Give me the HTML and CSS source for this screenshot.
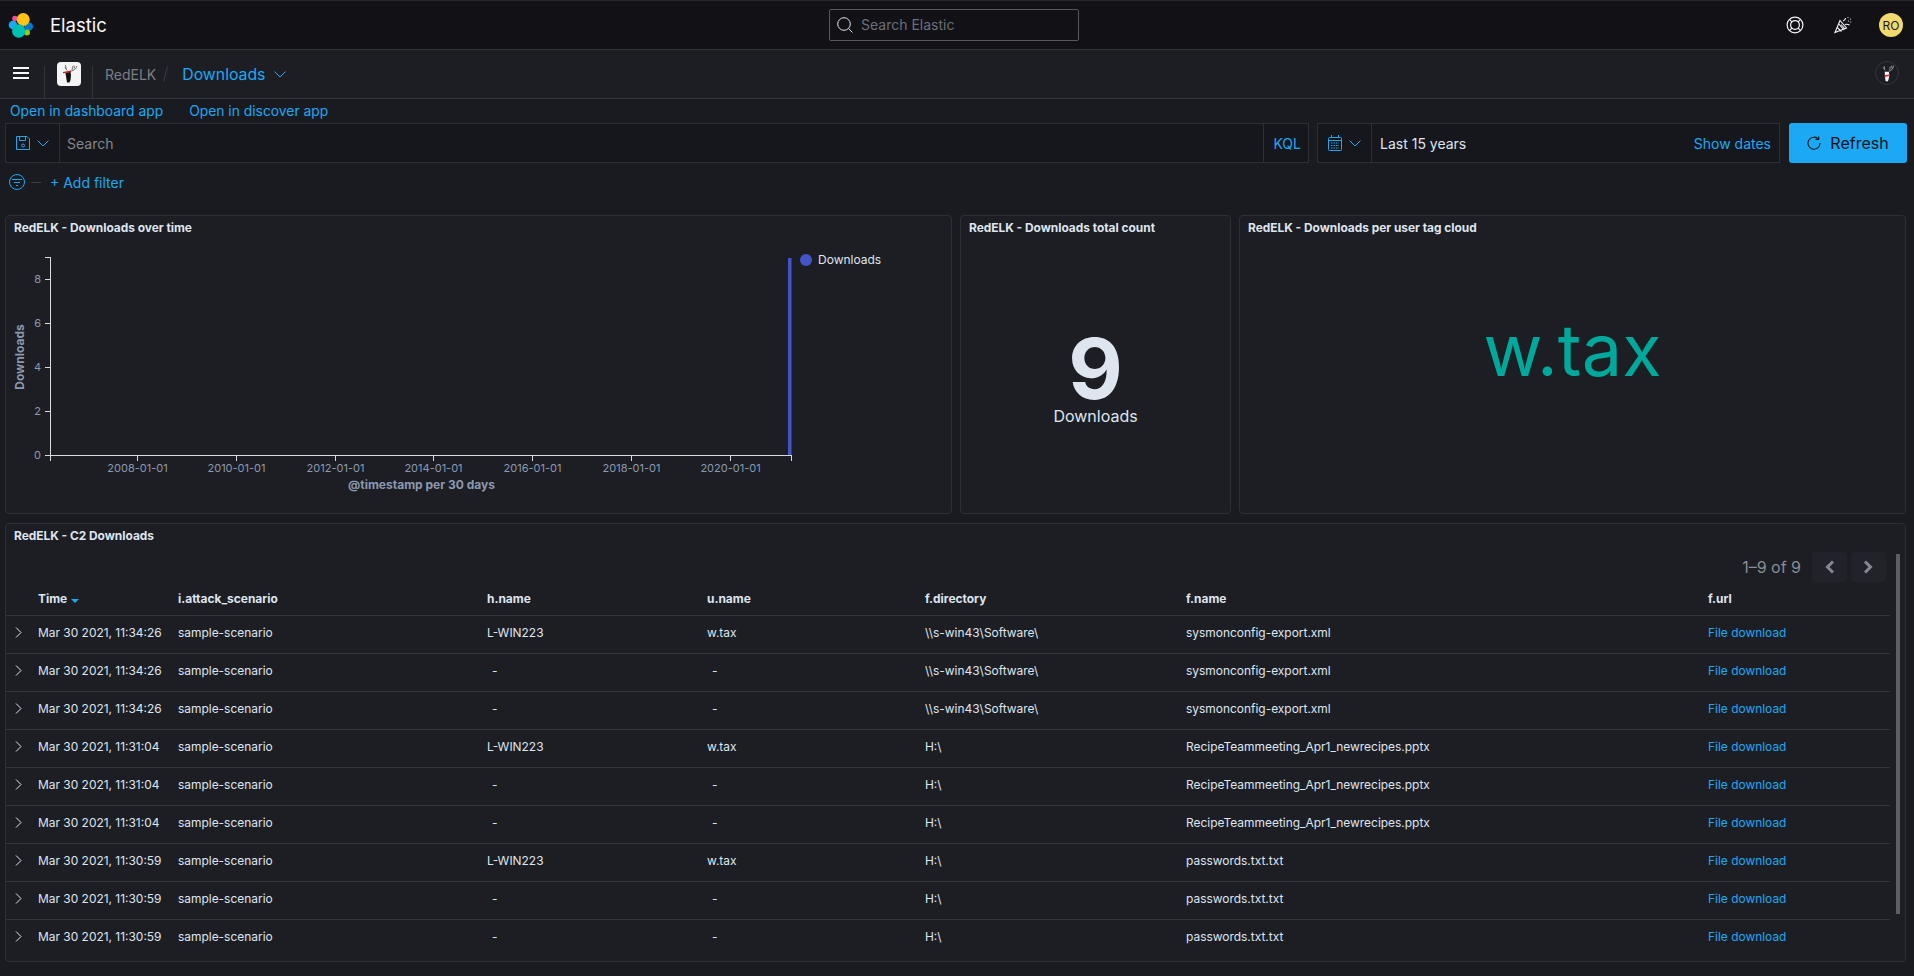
FILE: index.html
```html
<!DOCTYPE html>
<html lang="en">
<head>
<meta charset="utf-8">
<title>Downloads - Elastic</title>
<link rel="stylesheet" href="styles.css">
</head>
<body>
<header class="top-bar">
  <div class="brand">
    <svg class="brand-logo" viewBox="0 0 42 48" width="42" height="48">
      <circle cx="15" cy="17.500" r="2.800" fill="#f04e98"/>
      <circle cx="13" cy="24" r="4.300" fill="#1ba9f5"/>
      <circle cx="28.800" cy="25.500" r="4.300" fill="#0077cc"/>
      <circle cx="27" cy="31.500" r="3" fill="#93c90e"/>
      <circle cx="23.200" cy="18.500" r="6.500" fill="#fec514"/>
      <circle cx="18.700" cy="30" r="6.700" fill="#00bfb3"/>
    </svg>
    <span class="brand-name">Elastic</span>
  </div>
  <div class="global-search">
    <svg class="search-icon" viewBox="0 0 16 16" width="16" height="16" fill="none" stroke="#dfe5ef" stroke-width="1"><circle cx="7" cy="7" r="6.300"/><path d="M11.500 11.500l4 4"/></svg>
    <span>Search Elastic</span>
  </div>
  <div class="top-actions">
    <svg viewBox="0 0 18 18" width="18" height="18" fill="none" stroke="#f5f7fa" stroke-width="1.200"><circle cx="9" cy="9" r="7.900"/><circle cx="9" cy="9" r="4.400"/><path d="M3.400 3.400l2.500 2.500M14.600 3.400l-2.500 2.500M3.400 14.600l2.500-2.500M14.600 14.600l-2.500-2.500"/></svg>
    <svg viewBox="0 0 18 18" width="18" height="18" fill="none" stroke="#f5f7fa" stroke-width="1.100"><path d="M1 16.500L6 4.500l6.500 7.500z"/><path d="M3.200 11.500l4.300 4M4.800 8l5.200 6M7 8.500l4 4.500"/><path d="M9 5c1.500-.5 2.500-1.500 2.500-3M11 8.500c1.500-.5 3-.5 4.500.5"/><circle cx="14" cy="1.500" r=".6" fill="#f5f7fa" stroke="none"/><circle cx="16.500" cy="3" r=".6" fill="#f5f7fa" stroke="none"/><circle cx="14.500" cy="5" r=".6" fill="#f5f7fa" stroke="none"/><circle cx="16.800" cy="6" r=".6" fill="#f5f7fa" stroke="none"/></svg>
    <span class="avatar">RO</span>
  </div>
</header>

<nav class="nav-bar">
  <div class="nav-cell menu-cell">
    <svg viewBox="0 0 16 12" width="16" height="12" fill="none" stroke="#f5f7fa" stroke-width="2"><path d="M0 1h16M0 6h16M0 11h16"/></svg>
  </div>
  <div class="nav-cell logo-cell">
    <span class="deer-box">
      <svg viewBox="0 0 24 24" width="24" height="24"><path d="M8.500 11l5-1.500.5 4-.5 4.500-1 2.500H10l-.5-3z" fill="#111"/><path d="M14 9c3-.5 5-2 6-5M15 8l1-4M17.500 6.500l-.5-3M10 8.500L8 5M9 7l-.5-4" stroke="#666" stroke-width=".9" fill="none"/><path d="M6 10l8-1.500v1.800l-8 1z" fill="#b3232b"/></svg>
    </span>
  </div>
  <div class="crumbs">
    <span class="crumb-root">RedELK</span>
    <span class="crumb-sep"></span>
    <span class="crumb-current">Downloads</span>
    <svg class="crumb-chevron" viewBox="0 0 12 7" width="12" height="7" fill="none" stroke="#1ba9f5" stroke-width="1"><path d="M.5.500L6 6l5.500-5.500"/></svg>
  </div>
  <span class="deer-round">
    <svg viewBox="0 0 24 24" width="24" height="24"><path d="M9.500 10.500h4.500l.5 4-.5 3.500-1 3h-2.500l-.5-3z" fill="#f5f7fa"/><path d="M14 10c3-.5 5-3 5-6M15 8.500l.5-3.500M17.500 7l-.5-3M10 9L8 6M9 7.500V4.500" stroke="#a8abb3" stroke-width=".9" fill="none"/><path d="M9 14.500l5.500-1v1.800l-5 1z" fill="#d0303a"/></svg>
  </span>
</nav>

<div class="app-links">
  <a class="link">Open in dashboard app</a>
  <a class="link">Open in discover app</a>
</div>

<section class="query-row">
  <div class="query-group">
    <div class="save-btn">
      <svg viewBox="0 0 14 16" width="14" height="16" fill="none" stroke="#1ba9f5" stroke-width="1"><path d="M.5 1.500h10.500l2.500 2.500v10.500H.5z"/><path d="M3.500 1.500v4h6v-4"/><circle cx="7" cy="10.500" r="1.500"/></svg>
      <svg viewBox="0 0 12 7" width="12" height="7" fill="none" stroke="#1ba9f5" stroke-width="1"><path d="M.5.500L6 6l5.500-5.500"/></svg>
    </div>
    <span class="query-placeholder">Search</span>
    <span class="kql">KQL</span>
  </div>
  <div class="date-group">
    <div class="date-btn">
      <svg viewBox="0 0 14 16" width="14" height="16" fill="none" stroke="#1ba9f5" stroke-width="1"><rect x=".5" y="2.500" width="13" height="13" rx="1"/><path d="M.5 5.500h13M3.500 0v3M10.500 0v3"/><path d="M3 8h8M3 10.500h8M3 13h8" stroke-dasharray="1.500 1"/></svg>
      <svg viewBox="0 0 12 7" width="12" height="7" fill="none" stroke="#1ba9f5" stroke-width="1"><path d="M.5.500L6 6l5.500-5.500"/></svg>
    </div>
    <span class="date-value">Last 15 years</span>
    <span class="show-dates">Show dates</span>
  </div>
  <button class="refresh">
    <svg viewBox="0 0 14 14" width="14" height="14" fill="none" stroke="#111" stroke-width="1.100"><path d="M11.500 3.200A6 6 0 1 0 13 7"/><path d="M8.500 3.500h3.200V.500"/></svg>
    <span>Refresh</span>
  </button>
</section>

<div class="filter-row">
  <svg viewBox="0 0 16 16" width="16" height="16" fill="none" stroke="#1ba9f5" stroke-width="1"><circle cx="8" cy="8" r="7.500"/><path d="M3 5.500h10M5 8.500h6M7 11.500h2"/></svg>
  <span class="filter-dash"></span>
  <a class="link add-filter">+ Add filter</a>
</div>

<main class="dashboard">
  <div class="panel-row">
    <article class="panel panel-time">
      <h2 class="panel-title">RedELK - Downloads over time</h2>
      <svg class="chart" viewBox="6 240 944 273" width="944" height="273">
        <g class="axis">
          <path d="M50.500 257V455.500H791.500M45 257.500h5M45 279.500h5M45 323.500h5M45 367.500h5M45 411.500h5M45 455.500h5M50.500 455v6M137.500 455v6M236.500 455v6M335.500 455v6M433.500 455v6M532.500 455v6M631.500 455v6M730.500 455v6M791.500 455v6"/>
        </g>
        <rect class="bar" x="788" y="258" width="3.500" height="197"/>
        <g class="tick-label">
          <text x="41" y="283" text-anchor="end">8</text>
          <text x="41" y="327" text-anchor="end">6</text>
          <text x="41" y="371" text-anchor="end">4</text>
          <text x="41" y="415" text-anchor="end">2</text>
          <text x="41" y="459" text-anchor="end">0</text>
          <text x="137.500" y="472" text-anchor="middle">2008-01-01</text>
          <text x="236.500" y="472" text-anchor="middle">2010-01-01</text>
          <text x="335.500" y="472" text-anchor="middle">2012-01-01</text>
          <text x="433.500" y="472" text-anchor="middle">2014-01-01</text>
          <text x="532.500" y="472" text-anchor="middle">2016-01-01</text>
          <text x="631.500" y="472" text-anchor="middle">2018-01-01</text>
          <text x="730.500" y="472" text-anchor="middle">2020-01-01</text>
        </g>
        <text class="axis-title" transform="translate(24 357) rotate(-90)" text-anchor="middle">Downloads</text>
        <text class="axis-title" x="421.500" y="489" text-anchor="middle">@timestamp per 30 days</text>
        <circle class="legend-dot" cx="806" cy="260" r="6"/>
        <text class="legend-label" x="818" y="264">Downloads</text>
      </svg>
    </article>
    <article class="panel panel-count">
      <h2 class="panel-title">RedELK - Downloads total count</h2>
      <div class="metric">
        <div class="metric-value">9</div>
        <div class="metric-label">Downloads</div>
      </div>
    </article>
    <article class="panel panel-cloud">
      <h2 class="panel-title">RedELK - Downloads per user tag cloud</h2>
      <div class="cloud"><span class="cloud-tag">w.tax</span></div>
    </article>
  </div>

  <article class="panel panel-table">
    <h2 class="panel-title">RedELK - C2 Downloads</h2>
    <div class="table-area">
      <div class="table-main">
        <div class="pager">
          <span class="pager-text">1–9 of 9</span>
          <span class="pager-btn"><svg viewBox="0 0 11 14" width="11" height="14" fill="none" stroke="#85888f" stroke-width="3"><path d="M9 1.500L3.500 7 9 12.500"/></svg></span>
          <span class="pager-btn"><svg viewBox="0 0 11 14" width="11" height="14" fill="none" stroke="#85888f" stroke-width="3"><path d="M2 1.500L7.500 7 2 12.500"/></svg></span>
        </div>
        <table class="docs">
          <colgroup>
            <col class="c-exp"><col class="c-time"><col class="c-scn"><col class="c-host"><col class="c-user"><col class="c-dir"><col class="c-file"><col class="c-url">
          </colgroup>
          <thead>
            <tr><th></th><th>Time<span class="sort-arrow"></span></th><th>i.attack_scenario</th><th>h.name</th><th>u.name</th><th>f.directory</th><th>f.name</th><th>f.url</th></tr>
          </thead>
          <tbody>
            <tr><td class="exp"><svg viewBox="0 0 7 11" width="7" height="11" fill="none" stroke="#dfe5ef"><path d="M1 .500l5 5-5 5"/></svg></td><td>Mar 30 2021, 11:34:26</td><td>sample-scenario</td><td>L-WIN223</td><td>w.tax</td><td>\\s-win43\Software\</td><td>sysmonconfig-export.xml</td><td><a class="link">File download</a></td></tr>
            <tr><td class="exp"><svg viewBox="0 0 7 11" width="7" height="11" fill="none" stroke="#dfe5ef"><path d="M1 .500l5 5-5 5"/></svg></td><td>Mar 30 2021, 11:34:26</td><td>sample-scenario</td><td class="dash">-</td><td class="dash">-</td><td>\\s-win43\Software\</td><td>sysmonconfig-export.xml</td><td><a class="link">File download</a></td></tr>
            <tr><td class="exp"><svg viewBox="0 0 7 11" width="7" height="11" fill="none" stroke="#dfe5ef"><path d="M1 .500l5 5-5 5"/></svg></td><td>Mar 30 2021, 11:34:26</td><td>sample-scenario</td><td class="dash">-</td><td class="dash">-</td><td>\\s-win43\Software\</td><td>sysmonconfig-export.xml</td><td><a class="link">File download</a></td></tr>
            <tr><td class="exp"><svg viewBox="0 0 7 11" width="7" height="11" fill="none" stroke="#dfe5ef"><path d="M1 .500l5 5-5 5"/></svg></td><td>Mar 30 2021, 11:31:04</td><td>sample-scenario</td><td>L-WIN223</td><td>w.tax</td><td>H:\</td><td>RecipeTeammeeting_Apr1_newrecipes.pptx</td><td><a class="link">File download</a></td></tr>
            <tr><td class="exp"><svg viewBox="0 0 7 11" width="7" height="11" fill="none" stroke="#dfe5ef"><path d="M1 .500l5 5-5 5"/></svg></td><td>Mar 30 2021, 11:31:04</td><td>sample-scenario</td><td class="dash">-</td><td class="dash">-</td><td>H:\</td><td>RecipeTeammeeting_Apr1_newrecipes.pptx</td><td><a class="link">File download</a></td></tr>
            <tr><td class="exp"><svg viewBox="0 0 7 11" width="7" height="11" fill="none" stroke="#dfe5ef"><path d="M1 .500l5 5-5 5"/></svg></td><td>Mar 30 2021, 11:31:04</td><td>sample-scenario</td><td class="dash">-</td><td class="dash">-</td><td>H:\</td><td>RecipeTeammeeting_Apr1_newrecipes.pptx</td><td><a class="link">File download</a></td></tr>
            <tr><td class="exp"><svg viewBox="0 0 7 11" width="7" height="11" fill="none" stroke="#dfe5ef"><path d="M1 .500l5 5-5 5"/></svg></td><td>Mar 30 2021, 11:30:59</td><td>sample-scenario</td><td>L-WIN223</td><td>w.tax</td><td>H:\</td><td>passwords.txt.txt</td><td><a class="link">File download</a></td></tr>
            <tr><td class="exp"><svg viewBox="0 0 7 11" width="7" height="11" fill="none" stroke="#dfe5ef"><path d="M1 .500l5 5-5 5"/></svg></td><td>Mar 30 2021, 11:30:59</td><td>sample-scenario</td><td class="dash">-</td><td class="dash">-</td><td>H:\</td><td>passwords.txt.txt</td><td><a class="link">File download</a></td></tr>
            <tr><td class="exp"><svg viewBox="0 0 7 11" width="7" height="11" fill="none" stroke="#dfe5ef"><path d="M1 .500l5 5-5 5"/></svg></td><td>Mar 30 2021, 11:30:59</td><td>sample-scenario</td><td class="dash">-</td><td class="dash">-</td><td>H:\</td><td>passwords.txt.txt</td><td><a class="link">File download</a></td></tr>
          </tbody>
        </table>
      </div>
      <div class="scroll-thumb"></div>
    </div>
  </article>
</main>
</body>
</html>
```

FILE: styles.css
```css
* { box-sizing: border-box; }
html, body { height: 100%; }
body {
  margin: 0;
  height: 976px;
  overflow: hidden;
  background: #1a1b20;
  color: #dfe5ef;
  font-family: Inter, "Noto Sans", sans-serif;
  font-size: 14px;
}
.link { color: #1ba9f5; text-decoration: none; }

/* top bar */
.top-bar {
  height: 50px;
  background: #111116;
  border-top: 1px solid #26272c;
  border-bottom: 1px solid #343539;
  display: flex;
  align-items: center;
}
.brand {
  width: 829px;
  height: 48px;
  flex: none;
  display: flex;
  align-items: center;
}
.brand-logo { display: block; margin-right: 8px; flex: none; }
.brand-name { font-size: 18.500px; color: #f5f7fa; }
.global-search {
  width: 250px;
  height: 32px;
  flex: none;
  border: 1px solid #55575f;
  border-radius: 2px;
  display: flex;
  align-items: center;
  gap: 8px;
  padding-left: 7px;
  padding-bottom: 1px;
  color: #6d6f78;
  font-size: 14px;
}
.top-actions {
  flex: 1;
  display: flex;
  justify-content: flex-end;
  align-items: center;
  gap: 30px;
  padding-right: 11px;
}
.avatar {
  width: 24px;
  height: 24px;
  margin-left: -3px;
  border-radius: 50%;
  background: #f1d86f;
  color: #1a1b20;
  font-size: 12px;
  display: flex;
  align-items: center;
  justify-content: center;
}

/* nav bar */
.nav-bar {
  height: 49px;
  background: #1d1e24;
  border-bottom: 1px solid #343539;
  display: flex;
  align-items: flex-end;
}
.nav-cell {
  height: 32px;
  border-right: 1px solid #343539;
}
.menu-cell { width: 45px; display: flex; justify-content: center; }
.menu-cell svg { margin-top: 1px; margin-right: 2px; }
.logo-cell { width: 48px; display: flex; justify-content: center; }
.deer-box {
  width: 24px;
  height: 24px;
  margin-top: -4px;
  background: #f4f4f4;
  border-radius: 4px;
  display: block;
}
.deer-box svg { display: block; }
.crumbs {
  height: 47px;
  display: flex;
  align-items: center;
  padding-left: 12px;
  padding-bottom: 1px;
  flex: 1;
}
.crumb-root { color: #7b7d85; font-size: 14px; }
.crumb-sep {
  width: 1px;
  height: 16px;
  background: #3a3b42;
  transform: rotate(15deg);
  margin: 0 16px 0 9px;
}
.crumb-current { color: #1ba9f5; font-size: 15.800px; }
.crumb-chevron { margin-left: 9px; }
.deer-round {
  width: 24px;
  height: 24px;
  border: 1px solid #343539;
  border-radius: 50%;
  margin: 0 15px 13px 0;
  display: flex;
  align-items: center;
  justify-content: center;
  flex: none;
}

/* links */
.app-links {
  height: 24px;
  padding-left: 10px;
  padding-bottom: 1px;
  display: flex;
  align-items: center;
  gap: 26px;
  font-size: 13.850px;
}

/* query */
.query-row {
  height: 40px;
  padding: 0 7px 0 5px;
  display: flex;
  gap: 8px;
}
.query-group, .date-group {
  height: 40px;
  display: flex;
  flex: none;
  align-items: center;
  background: #16171c;
  border: 1px solid #2e2f35;
}
.query-group { width: 1304px; }
.date-group { width: 463px; }
.save-btn, .date-btn {
  height: 100%;
  display: flex;
  flex: none;
  align-items: center;
  gap: 7px;
  border-right: 1px solid #2e2f35;
}
.save-btn { width: 54px; padding-left: 10px; }
.query-placeholder { margin-left: 7px; color: #82858d; flex: 1; font-size: 14px; }
.kql {
  height: 100%;
  display: flex;
  align-items: center;
  padding: 0 7px 0 9px;
  border-left: 1px solid #2e2f35;
  color: #1ba9f5;
  font-size: 14px;
}
.date-btn { width: 54px; padding-left: 10px; }
.date-value { margin-left: 8px; flex: 1; color: #dfe5ef; font-size: 14px; }
.show-dates { color: #1ba9f5; padding-right: 8px; font-size: 14px; }
.refresh {
  width: 118px;
  height: 40px;
  flex: none;
  border: 0;
  border-radius: 3px;
  background: #1ba9f5;
  color: #111116;
  font-family: inherit;
  font-size: 16px;
  display: flex;
  align-items: center;
  justify-content: center;
  gap: 9px;
  padding: 0;
  margin-left: 1px;
}

/* filter */
.filter-row {
  height: 40px;
  padding-left: 9px;
  padding-bottom: 2px;
  display: flex;
  align-items: center;
}
.filter-dash { width: 10px; height: 1px; background: #3e4047; margin: 0 9px 0 6px; }

/* dashboard */
.dashboard {
  padding: 12px 8px 0 5px;
  display: flex;
  flex-direction: column;
  gap: 9px;
}
.panel-row { display: flex; gap: 8px; }
.panel {
  background: #1d1e24;
  border: 1px solid #2e2f36;
  border-radius: 4px;
}
.panel-time { width: 947px; height: 299px; }
.panel-count { width: 271px; height: 299px; display: flex; flex-direction: column; }
.panel-cloud { width: 667px; height: 299px; display: flex; flex-direction: column; }
.panel-title {
  margin: 0;
  height: 24px;
  padding-left: 8px;
  font-size: 11.900px;
  font-weight: 700;
  line-height: 24px;
  color: #dfe5ef;
}
.chart { display: block; }
.axis path { fill: none; stroke: #d8dbe2; stroke-width: 1; }
.bar { fill: #4254c8; }
.tick-label text { font-size: 11px; fill: #8a99b0; }
.axis-title { font-size: 12px; font-weight: 700; fill: #8a99b0; }
.legend-dot { fill: #4254c8; }
.legend-label { font-size: 12px; fill: #dfe5ef; }

.metric {
  flex: 1;
  display: flex;
  flex-direction: column;
  align-items: center;
  padding-top: 93px;
}
.metric-value { font-size: 84px; font-weight: 700; line-height: 72px; color: #dfe5ef; }
.metric-label { font-size: 16px; line-height: 22px; color: #dfe5ef; }
.cloud { flex: 1; display: flex; justify-content: center; padding-top: 65px; }
.cloud-tag { font-size: 72px; line-height: 90px; color: #00a99c; height: 90px; }

/* table */
.panel-table { height: 439px; }
.table-area { display: flex; padding-top: 4px; }
.table-main { width: 1884px; }
.pager {
  height: 30px;
  display: flex;
  justify-content: flex-end;
  align-items: center;
  gap: 4px;
  padding-right: 4px;
}
.pager-text { color: #8a8d95; font-size: 16px; margin-right: 7px; }
.pager-btn {
  width: 35px;
  height: 30px;
  background: #22232a;
  border-radius: 4px;
  display: flex;
  align-items: center;
  justify-content: center;
}
.docs { width: 1884px; border-collapse: collapse; table-layout: fixed; font-size: 11.950px; }
.c-exp { width: 32px; }
.c-time { width: 140px; }
.c-scn { width: 309px; }
.c-host { width: 220px; }
.c-user { width: 218px; }
.c-dir { width: 261px; }
.c-file { width: 522px; }
.c-url { width: 182px; }
.docs th {
  height: 33px;
  padding: 0;
  text-align: left;
  font-weight: 700;
  color: #dfe5ef;
  border-bottom: 1px solid #343539;
}
.docs td {
  height: 38px;
  padding: 0 0 3px;
  color: #dfe5ef;
  border-bottom: 1px solid #343539;
}
.docs tbody tr:last-child td { border-bottom: 0; }
.docs td.exp { padding-left: 9px; }
.exp svg { display: block; }
.docs td.dash { padding-left: 5px; }
.sort-arrow {
  display: inline-block;
  width: 0;
  height: 0;
  margin-left: 4px;
  border-left: 4px solid transparent;
  border-right: 4px solid transparent;
  border-top: 4px solid #1ba9f5;
}
.scroll-thumb {
  width: 4px;
  height: 360px;
  margin: 2px 0 0 6px;
  background: #5a5e69;
  flex: none;
}
```
